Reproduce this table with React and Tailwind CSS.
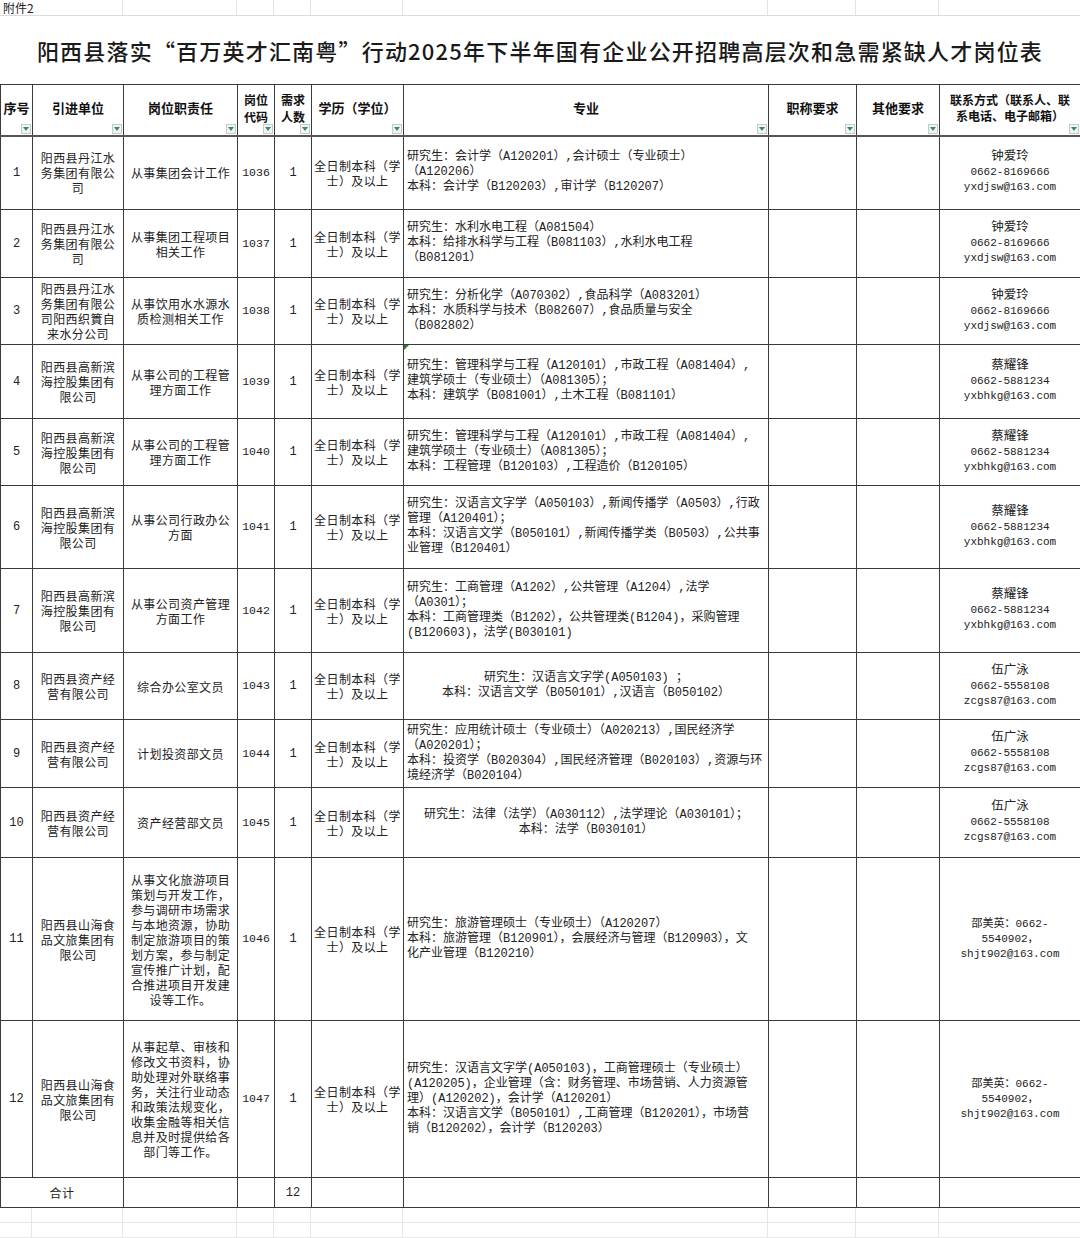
const EDU = ["全日制本科（学", "士）及以上"];

const DANJIANG = ["阳西县丹江水", "务集团有限公", "司"];
const GAOXIN = ["阳西县高新滨", "海控股集团有", "限公司"];
const ZICHAN = ["阳西县资产经", "营有限公司"];
const SHANHAI = ["阳西县山海食", "品文旅集团有", "限公司"];

const C_ZHONG = ["钟爱玲", "0662-8169666", "yxdjsw@163.com"];
const C_CAI = ["蔡耀锋", "0662-5881234", "yxbhkg@163.com"];
const C_WU = ["伍广泳", "0662-5558108", "zcgs87@163.com"];
const C_SHAO = ["邵美英：0662-", "5540902，", "shjt902@163.com"];

const rows = [
  {
    no: 1, h: "h-[74px]", unit: DANJIANG, duty: ["从事集团会计工作"], code: "1036",
    spec: ["研究生：会计学（A120201）,会计硕士（专业硕士）", "（A120206）", "本科：会计学（B120203）,审计学（B120207）"],
    contact: C_ZHONG, name: true,
  },
  {
    no: 2, h: "h-[68px]", unit: DANJIANG, duty: ["从事集团工程项目", "相关工作"], code: "1037",
    spec: ["研究生：水利水电工程（A081504）", "本科：给排水科学与工程（B081103）,水利水电工程", "（B081201）"],
    contact: C_ZHONG, name: true,
  },
  {
    no: 3, h: "h-[67px]", unit: ["阳西县丹江水", "务集团有限公", "司阳西织篢自", "来水分公司"],
    duty: ["从事饮用水水源水", "质检测相关工作"], code: "1038",
    spec: ["研究生：分析化学（A070302）,食品科学（A083201）", "本科：水质科学与技术（B082607）,食品质量与安全", "（B082802）"],
    contact: C_ZHONG, name: true,
  },
  {
    no: 4, h: "h-[74px]", unit: GAOXIN, duty: ["从事公司的工程管", "理方面工作"], code: "1039", mark: true,
    spec: ["研究生：管理科学与工程（A120101）,市政工程（A081404）,", "建筑学硕士（专业硕士）（A081305）；", "本科：建筑学（B081001）,土木工程（B081101）"],
    contact: C_CAI, name: true,
  },
  {
    no: 5, h: "h-[67px]", unit: GAOXIN, duty: ["从事公司的工程管", "理方面工作"], code: "1040",
    spec: ["研究生：管理科学与工程（A120101）,市政工程（A081404）,", "建筑学硕士（专业硕士）（A081305）；", "本科：工程管理（B120103）,工程造价（B120105）"],
    contact: C_CAI, name: true,
  },
  {
    no: 6, h: "h-[83px]", unit: GAOXIN, duty: ["从事公司行政办公", "方面"], code: "1041",
    spec: ["研究生：汉语言文字学（A050103）,新闻传播学（A0503）,行政", "管理（A120401）；", "本科：汉语言文学（B050101）,新闻传播学类（B0503）,公共事", "业管理（B120401）"],
    contact: C_CAI, name: true,
  },
  {
    no: 7, h: "h-[84px]", unit: GAOXIN, duty: ["从事公司资产管理", "方面工作"], code: "1042",
    spec: ["研究生：工商管理（A1202）,公共管理（A1204）,法学", "（A0301）；", "本科：工商管理类（B1202），公共管理类(B1204)，采购管理", "(B120603)，法学(B030101)"],
    contact: C_CAI, name: true,
  },
  {
    no: 8, h: "h-[67px]", unit: ZICHAN, duty: ["综合办公室文员"], code: "1043", center: true,
    spec: ["研究生：汉语言文字学(A050103) ；", "本科：汉语言文学（B050101）,汉语言（B050102）"],
    contact: C_WU, name: true,
  },
  {
    no: 9, h: "h-[68px]", unit: ZICHAN, duty: ["计划投资部文员"], code: "1044",
    spec: ["研究生：应用统计硕士（专业硕士）（A020213）,国民经济学", "（A020201）；", "本科：投资学（B020304）,国民经济管理（B020103）,资源与环", "境经济学（B020104）"],
    contact: C_WU, name: true,
  },
  {
    no: 10, h: "h-[70px]", unit: ZICHAN, duty: ["资产经营部文员"], code: "1045", center: true,
    spec: ["研究生：法律（法学）（A030112）,法学理论（A030101）；", "本科：法学（B030101）"],
    contact: C_WU, name: true,
  },
  {
    no: 11, h: "h-[163px]", unit: SHANHAI, code: "1046",
    duty: ["从事文化旅游项目", "策划与开发工作，", "参与调研市场需求", "与本地资源，协助", "制定旅游项目的策", "划方案，参与制定", "宣传推广计划，配", "合推进项目开发建", "设等工作。"],
    spec: ["研究生：旅游管理硕士（专业硕士）（A120207）", "本科：旅游管理（B120901），会展经济与管理（B120903），文", "化产业管理（B120210）"],
    contact: C_SHAO,
  },
  {
    no: 12, h: "h-[157px]", unit: SHANHAI, code: "1047",
    duty: ["从事起草、审核和", "修改文书资料，协", "助处理对外联络事", "务，关注行业动态", "和政策法规变化，", "收集金融等相关信", "息并及时提供给各", "部门等工作。"],
    spec: ["研究生：汉语言文字学(A050103)，工商管理硕士（专业硕士）", "(A120205)，企业管理（含：财务管理、市场营销、人力资源管", "理）(A120202)，会计学（A120201）", "本科：汉语言文学（B050101）,工商管理（B120201），市场营", "销（B120202），会计学（B120203）"],
    contact: C_SHAO,
  },
];

const topCells = ["w-[123px]", "w-[114px]", "w-[37px]", "w-[37px]", "w-[92px]", "w-[365px]", "w-[88px]", "w-[83px]", "w-[141px]"];
const gridCells = ["w-[32px]", "w-[91px]", "w-[114px]", "w-[37px]", "w-[37px]", "w-[92px]", "w-[365px]", "w-[88px]", "w-[83px]", "w-[141px]"];

function Lines({ items }) {
  return items.map((l, i) => (
    <div key={i} className="whitespace-nowrap">{l}</div>
  ));
}

function Filter() {
  return (
    <span className="absolute right-[1px] bottom-[1px] flex h-[10px] w-[10px] items-center justify-center border border-[#c9c9c9] bg-[#f3f3f3]">
      <svg width="6" height="4" viewBox="0 0 6 4">
        <path d="M0 0h6L3 4z" fill="#2f8f6f" />
      </svg>
    </span>
  );
}

function Head({ children }) {
  return (
    <th className="relative border border-b-2 border-[#3a3a3a] border-b-[#555] p-0 pb-[4px] align-middle text-[13px] font-bold leading-[16px] text-[#111]">
      {children}
      <Filter />
    </th>
  );
}

const cell = "border border-[#3a3a3a] p-0 align-middle text-center";
const cjk = "font-['Noto_Sans_CJK_SC',sans-serif] text-[12px] leading-[15px] tracking-[0.4px]";
const mono = "font-['Liberation_Mono','Noto_Sans_CJK_SC',monospace]";

export default function App() {
  return (
    <div className="w-[1080px] bg-white text-[#222] font-['Noto_Sans_CJK_SC',sans-serif]">
      <div className="flex h-[16px] border-b border-[#dcdcdc]">
        {topCells.map((w, i) => (
          <div key={i} className={`${w} shrink-0 border-r border-[#e3e3e3] pl-[3px] text-[12px] leading-[15px] last:border-r-0`}>
            {i === 0 ? "附件2" : ""}
          </div>
        ))}
      </div>

      <div className="flex h-[68px] items-center justify-center">
        <h1 className="text-[22px] font-medium tracking-[1.2px] text-[#1a1a1a]">
          阳西县落实“百万英才汇南粤”行动2025年下半年国有企业公开招聘高层次和急需紧缺人才岗位表
        </h1>
      </div>

      <table className="w-[1080px] table-fixed border-collapse">
        <colgroup>
          <col className="w-[32px]" />
          <col className="w-[91px]" />
          <col className="w-[114px]" />
          <col className="w-[37px]" />
          <col className="w-[37px]" />
          <col className="w-[92px]" />
          <col className="w-[365px]" />
          <col className="w-[88px]" />
          <col className="w-[83px]" />
          <col className="w-[141px]" />
        </colgroup>
        <thead>
          <tr className="h-[51px]">
            <Head>序号</Head>
            <Head>引进单位</Head>
            <Head>岗位职责任</Head>
            <Head><span className="text-[12px] leading-[17px]">岗位<br />代码</span></Head>
            <Head><span className="text-[12px] leading-[17px]">需求<br />人数</span></Head>
            <Head>学历（学位）</Head>
            <Head>专业</Head>
            <Head>职称要求</Head>
            <Head>其他要求</Head>
            <Head>
              <span className="text-[12px] leading-[15px]">联系方式（联系人、联<br />系电话、电子邮箱）</span>
            </Head>
          </tr>
        </thead>
        <tbody>
          {rows.map((r) => (
            <tr key={r.no} className={r.h}>
              <td className={`${cell} ${mono} text-[12px]`}>{r.no}</td>
              <td className={`${cell} ${cjk}`}><Lines items={r.unit} /></td>
              <td className={`${cell} ${cjk}`}><Lines items={r.duty} /></td>
              <td className={`${cell} ${mono} text-[11.5px]`}>{r.code}</td>
              <td className={`${cell} ${mono} text-[12px]`}>1</td>
              <td className={`${cell} ${cjk}`}><Lines items={EDU} /></td>
              <td className={`${cell} relative ${mono} text-[12px] leading-[15px] ${r.center ? "text-center" : "pl-[3px] text-left"}`}>
                {r.mark && (
                  <span className="absolute left-0 top-0 h-0 w-0 border-t-[5px] border-r-[5px] border-t-[#2e7d32] border-r-transparent" />
                )}
                <Lines items={r.spec} />
              </td>
              <td className={cell}></td>
              <td className={cell}></td>
              <td className={`${cell} ${mono} text-[11px] leading-[15px]`}>
                {r.name ? (
                  <>
                    <div className="text-[12.5px]">{r.contact[0]}</div>
                    <Lines items={r.contact.slice(1)} />
                  </>
                ) : (
                  <Lines items={r.contact} />
                )}
              </td>
            </tr>
          ))}
          <tr className="h-[30px]">
            <td colSpan={2} className={`${cell} ${cjk}`}>合计</td>
            <td className={cell}></td>
            <td className={cell}></td>
            <td className={`${cell} ${mono} text-[12px]`}>12</td>
            <td className={cell}></td>
            <td className={cell}></td>
            <td className={cell}></td>
            <td className={cell}></td>
            <td className={cell}></td>
          </tr>
        </tbody>
      </table>

      {[0, 1].map((k) => (
        <div key={k} className="flex h-[15px] border-b border-[#e6e6e6]">
          {gridCells.map((w, i) => (
            <div key={i} className={`${w} shrink-0 border-r border-[#e6e6e6] last:border-r-0`} />
          ))}
        </div>
      ))}
    </div>
  );
}
